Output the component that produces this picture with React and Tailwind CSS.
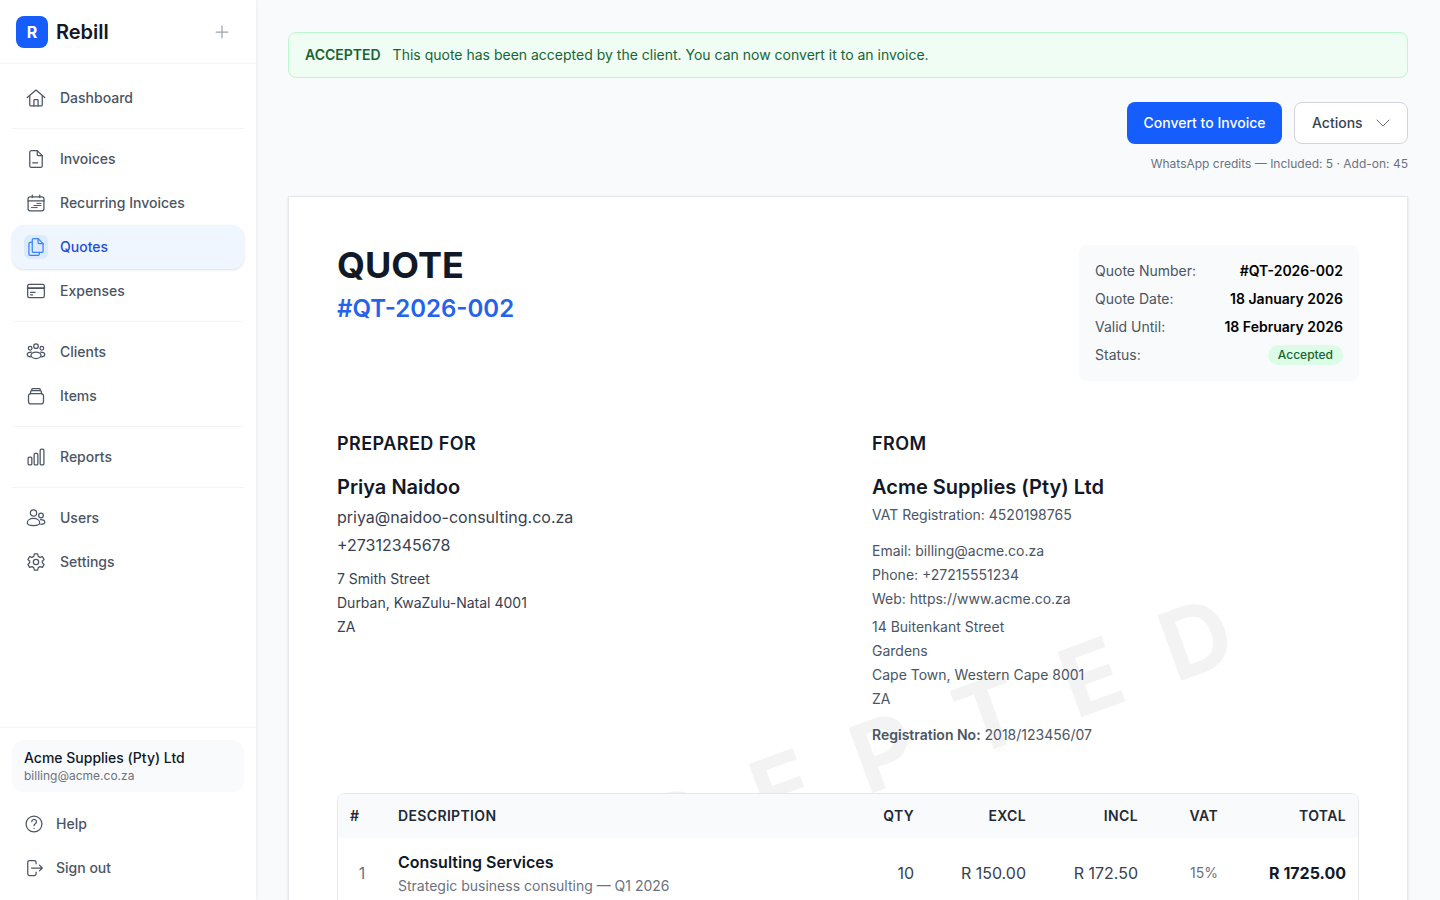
import { Plus, ChevronDown } from "lucide-react";

const Icon = ({ children, className = "w-5 h-5 text-[#4b5563]" }) => (
  <svg
    viewBox="0 0 24 24"
    fill="none"
    stroke="currentColor"
    strokeWidth="1.5"
    strokeLinecap="round"
    strokeLinejoin="round"
    className={className}
  >
    {children}
  </svg>
);

const icons = {
  home: (
    <>
      <path d="M1.500 11.500 12 2.500l10.500 9" />
      <path d="M4.500 9.500V20a1.500 1.500 0 0 0 1.500 1.500h12a1.500 1.500 0 0 0 1.500-1.500V9.500" />
      <path d="M9.500 21.500V15a1 1 0 0 1 1-1h3a1 1 0 0 1 1 1v6.500" />
    </>
  ),
  invoice: (
    <>
      <path d="M13.500 2H6.500A2 2 0 0 0 4.500 4v16a2 2 0 0 0 2 2h11a2 2 0 0 0 2-2V8z" />
      <path d="M13.500 2v4.500A1.500 1.500 0 0 0 15 8h4.500" />
      <path d="M8 16.500h6" />
    </>
  ),
  recurring: (
    <>
      <rect x="2.500" y="4.500" width="19" height="17" rx="2.500" />
      <path d="M2.500 9.500h19M7.500 2.500v3M16.500 2.500v3" />
      <path d="M13 12.500h5M9.500 15h8.500M6.500 17.500h7" strokeWidth="1.200" />
    </>
  ),
  quotes: (
    <>
      <path d="M9 2h5.500L20.500 8v9a1.500 1.500 0 0 1-1.500 1.500H9A1.500 1.500 0 0 1 7.500 17V3.500A1.500 1.500 0 0 1 9 2z" />
      <path d="M14.500 2v4.500A1.500 1.500 0 0 0 16 8h4.500" />
      <path d="M7.500 6.500H5A1.500 1.500 0 0 0 3.500 8v12.500A1.500 1.500 0 0 0 5 22h9.500a1.500 1.500 0 0 0 1.500-1.500v-2" />
    </>
  ),
  expenses: (
    <>
      <rect x="2" y="4" width="20" height="16" rx="2" />
      <path d="M2 8.500h20" strokeWidth="2.200" />
      <path d="M5.500 13.500h5.500M5.500 16.500h2.500" />
    </>
  ),
  clients: (
    <>
      <circle cx="12" cy="5" r="2.700" />
      <circle cx="5" cy="7.500" r="2.200" />
      <circle cx="19" cy="7.500" r="2.200" />
      <ellipse cx="12" cy="16" rx="6" ry="3.800" />
      <path d="M6.500 12C3.500 12 1.500 13.200 1.500 15s1.700 2.800 4.300 2.800" />
      <path d="M17.500 12c3 0 5 1.200 5 3s-1.700 2.800-4.300 2.800" />
    </>
  ),
  items: (
    <>
      <rect x="3" y="9" width="18" height="12.500" rx="3" />
      <path d="M5.500 9V7a1.500 1.500 0 0 1 1.500-1.500h10A1.500 1.500 0 0 1 18.500 7v2" />
      <path d="M7 5.500V4a1 1 0 0 1 1-1h8a1 1 0 0 1 1 1v1.500" />
    </>
  ),
  reports: (
    <>
      <rect x="2.500" y="12" width="4.500" height="9.500" rx="1.500" />
      <rect x="9.750" y="7.500" width="4.500" height="14" rx="1.500" />
      <rect x="17" y="2.500" width="4.500" height="19" rx="1.500" />
    </>
  ),
  users: (
    <>
      <circle cx="9" cy="6" r="3.800" />
      <circle cx="18" cy="9" r="2.800" />
      <path d="M1.500 18c0-3.300 3.200-5.500 7.500-5.500s7.500 2.200 7.500 5.500c0 2-3.200 3-7.500 3s-7.500-1-7.500-3z" />
      <path d="M17.500 14c3 0 5 1.100 5 3 0 1.500-1.700 2.500-4.700 2.500" />
    </>
  ),
  settings: (
    <>
      <path d="M10 2.300h4l.7 2.900 2.100 1.200 2.900-.9 2 3.500-2.200 2v2l2.200 2-2 3.500-2.900-.9-2.100 1.200-.7 2.900h-4l-.7-2.900-2.100-1.200-2.900.9-2-3.500 2.200-2v-2l-2.200-2 2-3.500 2.900.9 2.100-1.200z" />
      <circle cx="12" cy="12" r="3.200" />
    </>
  ),
  help: (
    <>
      <circle cx="12" cy="12" r="9.500" />
      <path d="M9.300 9.300a2.800 2.800 0 1 1 4.300 2.400c-1 .6-1.600 1.200-1.600 2.300" />
      <path d="M12 17.200v.1" />
    </>
  ),
  signout: (
    <>
      <path d="M14.500 7V5a2 2 0 0 0-2-2H6.500a2 2 0 0 0-2 2v14a2 2 0 0 0 2 2h6a2 2 0 0 0 2-2v-2" />
      <path d="M9 12h13M18.500 8.500 22 12l-3.500 3.500" />
    </>
  ),
};

const navGroups = [
  [{ label: "Dashboard", icon: "home" }],
  [
    { label: "Invoices", icon: "invoice" },
    { label: "Recurring Invoices", icon: "recurring" },
    { label: "Quotes", icon: "quotes", active: true },
    { label: "Expenses", icon: "expenses" },
  ],
  [
    { label: "Clients", icon: "clients" },
    { label: "Items", icon: "items" },
  ],
  [{ label: "Reports", icon: "reports" }],
  [
    { label: "Users", icon: "users" },
    { label: "Settings", icon: "settings" },
  ],
];

const metaRows = [
  { label: "Quote Number:", value: "#QT-2026-002" },
  { label: "Quote Date:", value: "18 January 2026" },
  { label: "Valid Until:", value: "18 February 2026" },
];

const NavItem = ({ item }) => (
  <a
    className={`flex items-center gap-3 h-11 px-3 rounded-xl text-sm font-medium ${
      item.active ? "bg-[#eff6ff] text-[#1d4ed8] shadow-sm" : "text-[#4b5563]"
    }`}
  >
    <span
      className={`flex items-center justify-center w-6 h-6 rounded-md ${
        item.active ? "bg-[#dbeafe]" : ""
      }`}
    >
      <Icon className={`w-5 h-5 ${item.active ? "text-[#3b82f6]" : "text-[#4b5563]"}`}>
        {icons[item.icon]}
      </Icon>
    </span>
    {item.label}
  </a>
);

const Sidebar = () => (
  <aside className="relative z-10 flex flex-col w-64 shrink-0 h-full bg-white shadow-[1px_0_3px_rgba(0,0,0,0.05)]">
    <div className="flex items-center justify-between h-16 px-4 border-b border-[#f3f4f6]">
      <div className="flex items-center gap-2">
        <span className="flex items-center justify-center w-8 h-8 rounded-lg bg-[#155dfc] text-white text-base font-bold">
          R
        </span>
        <span className="text-xl font-semibold text-[#111827]">Rebill</span>
      </div>
      <Plus className="w-5 h-5 mr-2 text-[#9ca3af]" strokeWidth={1.5} />
    </div>
    <nav className="flex-1 px-3 pt-3">
      {navGroups.map((group, i) => (
        <div
          key={i}
          className={i > 0 ? "mt-2 pt-2 border-t border-[#f3f4f6]" : ""}
        >
          {group.map((item) => (
            <NavItem key={item.label} item={item} />
          ))}
        </div>
      ))}
    </nav>
    <div className="px-3 pt-3 pb-[10px] border-t border-[#f3f4f6]">
      <div className="h-[52px] px-3 py-2 rounded-xl bg-[#f9fafb]">
        <p className="text-sm leading-5 font-medium text-[#111827]">Acme Supplies (Pty) Ltd</p>
        <p className="text-xs leading-4 text-[#6b7280]">billing@acme.co.za</p>
      </div>
      <div className="mt-[10px]">
        {[
          { label: "Help", icon: "help" },
          { label: "Sign out", icon: "signout" },
        ].map((item) => (
          <a
            key={item.label}
            className="flex items-center gap-3 h-11 px-3 text-sm font-medium text-[#4b5563]"
          >
            <Icon>{icons[item.icon]}</Icon>
            {item.label}
          </a>
        ))}
      </div>
    </div>
  </aside>
);

const QuoteDocument = () => (
  <section className="relative overflow-hidden p-12 mt-6 bg-white border border-[#e5e7eb] shadow-sm">
    <div className="absolute left-1/2 top-[568px] -translate-x-1/2 -translate-y-1/2 -rotate-[20deg] text-[96px] leading-none font-bold tracking-[0.5em] text-[#111827]/[0.05] whitespace-nowrap">
      ACCEPTED
    </div>

    <div className="relative flex justify-between">
      <div>
        <h1 className="text-4xl font-bold text-[#111827]">QUOTE</h1>
        <p className="mt-2 text-2xl font-semibold text-[#2563eb]">#QT-2026-002</p>
      </div>
      <div className="w-[280px] h-[136px] px-4 pt-3 rounded-lg bg-[#f9fafb] text-sm">
        {metaRows.map((row) => (
          <div key={row.label} className="flex items-center justify-between h-7">
            <span className="text-[#4b5563]">{row.label}</span>
            <span className="font-semibold text-black">{row.value}</span>
          </div>
        ))}
        <div className="flex items-center justify-between h-7">
          <span className="text-[#4b5563]">Status:</span>
          <span className="px-[10px] h-5 leading-5 rounded-full bg-[#dcfce7] text-xs font-medium text-[#166534]">
            Accepted
          </span>
        </div>
      </div>
    </div>

    <div className="relative grid grid-cols-2 gap-12 mt-[49px]">
      <div>
        <h2 className="text-lg font-semibold tracking-wide text-[#111827]">PREPARED FOR</h2>
        <p className="mt-[15px] text-xl font-semibold text-[#111827]">Priya Naidoo</p>
        <p className="mt-[2px] leading-7 text-[#374151]">priya@naidoo-consulting.co.za</p>
        <p className="leading-7 text-[#374151]">+27312345678</p>
        <div className="mt-2 text-sm leading-6 text-[#374151]">
          <p>7 Smith Street</p>
          <p>Durban, KwaZulu-Natal 4001</p>
          <p>ZA</p>
        </div>
      </div>
      <div className="text-sm text-[#4b5563]">
        <h2 className="text-lg font-semibold tracking-wide text-[#111827]">FROM</h2>
        <p className="mt-[15px] text-xl font-semibold text-[#111827]">Acme Supplies (Pty) Ltd</p>
        <p className="mt-[2px] leading-6">VAT Registration: 4520198765</p>
        <div className="mt-3 leading-6">
          <p>Email: billing@acme.co.za</p>
          <p>Phone: +27215551234</p>
          <p>Web: https://www.acme.co.za</p>
        </div>
        <div className="mt-1 leading-6">
          <p>14 Buitenkant Street</p>
          <p>Gardens</p>
          <p>Cape Town, Western Cape 8001</p>
          <p>ZA</p>
        </div>
        <p className="mt-3 leading-6">
          <span className="font-semibold">Registration No:</span> 2018/123456/07
        </p>
      </div>
    </div>

    <div className="relative mt-[46px] bg-white border border-[#e5e7eb] rounded-lg overflow-hidden">
      <table className="w-full table-fixed text-sm">
        <colgroup>
          <col className="w-12" />
          <col />
          <col className="w-20" />
          <col className="w-28" />
          <col className="w-28" />
          <col className="w-20" />
          <col className="w-32" />
        </colgroup>
        <thead className="bg-[#f9fafb]">
          <tr className="h-11 font-semibold tracking-wide text-[#1f2937]">
            <th className="px-3 text-left font-semibold">#</th>
            <th className="px-3 text-left font-semibold">DESCRIPTION</th>
            <th className="px-3 text-right font-semibold">QTY</th>
            <th className="px-3 text-right font-semibold">EXCL</th>
            <th className="px-3 text-right font-semibold">INCL</th>
            <th className="px-3 text-right font-semibold">VAT</th>
            <th className="px-3 text-right font-semibold">TOTAL</th>
          </tr>
        </thead>
        <tbody>
          <tr className="h-[70px]">
            <td className="px-3 text-center text-base text-[#6b7280]">1</td>
            <td className="px-3 pt-[2px]">
              <p className="text-base font-semibold leading-6 text-[#111827]">Consulting Services</p>
              <p className="text-sm leading-6 text-[#6b7280]">Strategic business consulting — Q1 2026</p>
            </td>
            <td className="px-3 text-right text-base text-[#374151]">10</td>
            <td className="px-3 text-right text-base text-[#374151]">R 150.00</td>
            <td className="px-3 text-right text-base text-[#374151]">R 172.50</td>
            <td className="px-3 text-right text-sm text-[#6b7280]">15%</td>
            <td className="px-3 text-right text-base font-bold text-[#111827]">R 1725.00</td>
          </tr>
        </tbody>
      </table>
    </div>
  </section>
);

export default function App() {
  return (
    <div className="flex h-screen overflow-hidden bg-[#f9fafb] font-['Inter',sans-serif]">
      <Sidebar />
      <main className="flex-1 min-w-0 overflow-hidden px-8 pt-8">
        <div className="flex items-center gap-3 h-[46px] px-4 rounded-lg border border-[#bbf7d0] bg-[#f0fdf4] text-sm text-[#166534]">
          <span className="font-semibold">ACCEPTED</span>
          <span>This quote has been accepted by the client. You can now convert it to an invoice.</span>
        </div>

        <div className="flex justify-end gap-3 mt-6">
          <button className="h-[42px] w-[155px] rounded-lg bg-[#155dfc] text-sm font-medium text-white">
            Convert to Invoice
          </button>
          <button className="flex items-center gap-2 h-[42px] w-[114px] pl-[17px] rounded-lg border border-[#d1d5db] bg-white text-sm font-medium text-[#374151]">
            Actions
            <ChevronDown className="w-6 h-6 text-[#6b7280]" strokeWidth={1} />
          </button>
        </div>
        <p className="mt-3 text-xs leading-4 text-right text-[#6b7280]">
          WhatsApp credits — Included: 5 · Add-on: 45
        </p>

        <QuoteDocument />
      </main>
    </div>
  );
}
